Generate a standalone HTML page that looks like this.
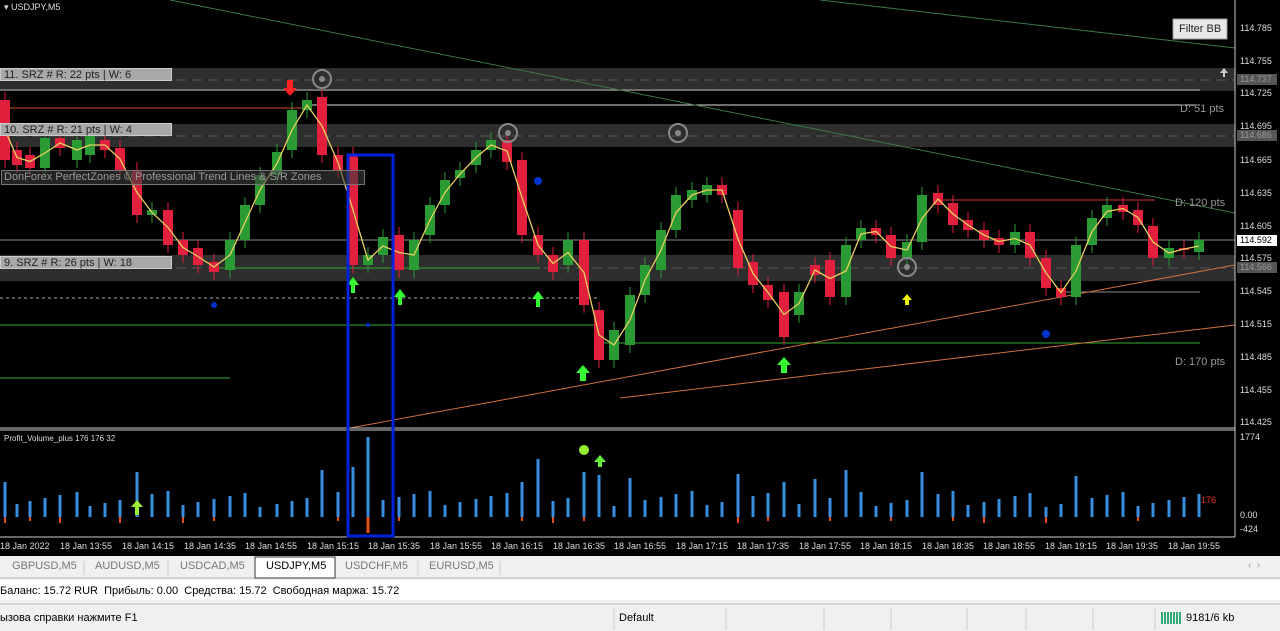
<!DOCTYPE html>
<html><head><meta charset="utf-8"><style>
body{margin:0;width:1280px;height:631px;overflow:hidden;background:#000;font-family:"Liberation Sans",sans-serif;position:relative}
.ax{position:absolute;left:1240px;font-size:9px;color:#ddd}
.tl{position:absolute;top:541px;font-size:9px;color:#ddd;white-space:nowrap}
.zl{position:absolute;left:0;width:172px;height:13px;background:#a8a8a8;color:#222;font-size:11px;line-height:13px;padding-left:3px;box-sizing:border-box;border:1px solid #ccc}
.tab{position:absolute;top:560px;font-size:11px;color:#777}
</style></head><body>
<svg id="s" width="1280" height="631" style="position:absolute;left:0;top:0">
<!-- zones -->
<rect x="0" y="68" width="1235" height="23" fill="#2e2e2e"/>
<rect x="0" y="124" width="1235" height="23" fill="#2e2e2e"/>
<rect x="0" y="255" width="1235" height="26" fill="#2e2e2e"/>
<line x1="0" y1="80" x2="1235" y2="80" stroke="#555" stroke-dasharray="10,6"/>
<line x1="0" y1="136" x2="1235" y2="136" stroke="#555" stroke-dasharray="10,6"/>
<line x1="0" y1="268" x2="1235" y2="268" stroke="#555" stroke-dasharray="10,6"/>
<line x1="0" y1="90" x2="1200" y2="90" stroke="#aaa"/>
<line x1="0" y1="108" x2="310" y2="108" stroke="#d05020"/>
<line x1="310" y1="105" x2="1200" y2="105" stroke="#ddd"/>
<line x1="0" y1="240" x2="1235" y2="240" stroke="#888"/>
<line x1="215" y1="268" x2="540" y2="268" stroke="#3a3"/>
<line x1="0" y1="325" x2="600" y2="325" stroke="#3a3"/>
<line x1="0" y1="378" x2="230" y2="378" stroke="#3a3"/>
<line x1="0" y1="298" x2="600" y2="298" stroke="#aaa" stroke-dasharray="3,3"/>
<line x1="600" y1="343" x2="1200" y2="343" stroke="#3a3"/>
<line x1="1060" y1="292" x2="1200" y2="292" stroke="#888"/>
<line x1="940" y1="200" x2="1155" y2="200" stroke="#c33"/>
<line x1="170" y1="0" x2="1235" y2="213" stroke="#3a7a4a"/>
<line x1="820" y1="0" x2="1235" y2="48" stroke="#3a7a4a"/>
<line x1="350" y1="428" x2="1235" y2="265" stroke="#d07040"/>
<line x1="620" y1="398" x2="1235" y2="325" stroke="#d07040"/>
<g id="c"></g>
<g fill="none" stroke="#888" stroke-width="2"><circle cx="322" cy="79" r="9"/><circle cx="508" cy="133" r="9"/><circle cx="678" cy="133" r="9"/><circle cx="907" cy="267" r="9"/></g>
<g fill="#888"><circle cx="322" cy="79" r="3"/><circle cx="508" cy="133" r="3"/><circle cx="678" cy="133" r="3"/><circle cx="907" cy="267" r="3"/></g>
<g fill="#3f3"><path d="M347 285l6-8 6 8h-4v8h-4v-8z"/><path d="M394 297l6-8 6 8h-4v8h-4v-8z"/><path d="M532 299l6-8 6 8h-4v8h-4v-8z"/><path d="M576 373l7-8 7 8h-4v8h-6v-8z"/><path d="M777 365l7-8 7 8h-4v8h-6v-8z"/></g>
<path d="M902 300l5-6 5 6h-3v5h-4v-5z" fill="#ee0"/>
<path d="M283 88l7 8 7-8h-4v-8h-6v8z" fill="#f22"/>
<g fill="#0033cc"><circle cx="214" cy="305" r="3"/><circle cx="538" cy="181" r="4"/><circle cx="1046" cy="334" r="4"/><circle cx="368" cy="325" r="2"/></g>
<line x1="0" y1="428" x2="1235" y2="428" stroke="#ccc"/>
<line x1="0" y1="430" x2="1235" y2="430" stroke="#ccc"/>
<line x1="1235" y1="0" x2="1235" y2="537" stroke="#ccc"/>
<line x1="0" y1="537" x2="1235" y2="537" stroke="#ccc"/>
<g id="v"></g>
<circle cx="584" cy="450" r="5" fill="#9e3"/>
<path d="M594 462l6-7 6 7h-4v5h-4v-5z" fill="#6e3"/>
<path d="M131 507l6-7 6 7h-4v8h-4v-8z" fill="#9e3"/>
<rect x="348" y="155" width="45" height="381" fill="none" stroke="#0022dd" stroke-width="3"/>
<rect x="1173" y="19" width="54" height="20" fill="#e8e8e8" stroke="#999"/>
<path d="M1220 73l4-5 4 5h-3v4h-2v-4z" fill="#ccc"/>
<rect x="1237" y="74" width="40" height="11" fill="#555"/>
<rect x="1237" y="130" width="40" height="11" fill="#555"/>
<rect x="1237" y="235" width="40" height="11" fill="#fff"/>
<rect x="1237" y="262" width="40" height="11" fill="#555"/>
<rect x="0" y="556" width="1280" height="75" fill="#f0f0f0"/>
<rect x="0" y="580" width="1280" height="20" fill="#fff"/>
<line x1="0" y1="578" x2="1280" y2="578" stroke="#bbb"/>
<line x1="0" y1="604" x2="1280" y2="604" stroke="#bbb"/>
<rect x="255" y="557" width="80" height="21" fill="#fff" stroke="#333"/>
<g stroke="#ccc"><line x1="84" y1="561" x2="84" y2="575"/><line x1="168" y1="561" x2="168" y2="575"/><line x1="418" y1="561" x2="418" y2="575"/><line x1="500" y1="561" x2="500" y2="575"/>
<line x1="614" y1="608" x2="614" y2="630"/><line x1="726" y1="608" x2="726" y2="630"/><line x1="824" y1="608" x2="824" y2="630"/><line x1="891" y1="608" x2="891" y2="630"/><line x1="967" y1="608" x2="967" y2="630"/><line x1="1026" y1="608" x2="1026" y2="630"/><line x1="1093" y1="608" x2="1093" y2="630"/><line x1="1155" y1="608" x2="1155" y2="630"/></g>
<g fill="#3a7"><rect x="1161" y="612" width="2" height="12"/><rect x="1164" y="612" width="2" height="12"/><rect x="1167" y="612" width="2" height="12"/><rect x="1170" y="612" width="2" height="12"/><rect x="1173" y="612" width="2" height="12"/><rect x="1176" y="612" width="2" height="12"/><rect x="1179" y="612" width="2" height="12"/></g>
</svg>
<div style="position:absolute;left:4px;top:2px;color:#ddd;font-size:9px">▾ USDJPY,M5</div>
<div class="zl" style="top:68px">11. SRZ # R: 22 pts | W: 6</div>
<div class="zl" style="top:123px">10. SRZ # R: 21 pts | W: 4</div>
<div class="zl" style="top:256px">9. SRZ # R: 26 pts | W: 18</div>
<div style="position:absolute;left:1px;top:170px;width:360px;height:13px;border:1px solid #777;background:rgba(60,60,60,.6);color:#999;font-size:11px;line-height:13px;padding-left:2px">DonForex PerfectZones © Professional Trend Lines &amp; S/R Zones</div>
<div style="position:absolute;left:1179px;top:23px;font-size:11px;color:#222">Filter BB</div>
<div style="position:absolute;left:1180px;top:103px;font-size:11px;color:#999">D: 51 pts</div>
<div style="position:absolute;left:1175px;top:197px;font-size:11px;color:#999">D: 120 pts</div>
<div style="position:absolute;left:1175px;top:356px;font-size:11px;color:#999">D: 170 pts</div>
<div style="position:absolute;left:4px;top:434px;font-size:8px;color:#ddd">Profit_Volume_plus 176 176 32</div>
<div style="position:absolute;left:1201px;top:495px;font-size:9px;color:#e33">176</div>
<div class="ax" style="top:23px">114.785</div><div class="ax" style="top:56px">114.755</div><div class="ax" style="top:74px;color:#999">114.737</div><div class="ax" style="top:88px">114.725</div><div class="ax" style="top:121px">114.695</div><div class="ax" style="top:130px;color:#999">114.686</div><div class="ax" style="top:155px">114.665</div><div class="ax" style="top:188px">114.635</div><div class="ax" style="top:221px">114.605</div><div class="ax" style="top:235px;color:#000">114.592</div><div class="ax" style="top:253px">114.575</div><div class="ax" style="top:262px;color:#999">114.566</div><div class="ax" style="top:286px">114.545</div><div class="ax" style="top:319px">114.515</div><div class="ax" style="top:352px">114.485</div><div class="ax" style="top:385px">114.455</div><div class="ax" style="top:417px">114.425</div><div class="ax" style="top:432px">1774</div><div class="ax" style="top:510px">0.00</div><div class="ax" style="top:524px">-424</div>
<div class="tl" style="left:0">18 Jan 2022</div><div class="tl" style="left:60px">18 Jan 13:55</div><div class="tl" style="left:122px">18 Jan 14:15</div><div class="tl" style="left:184px">18 Jan 14:35</div><div class="tl" style="left:245px">18 Jan 14:55</div><div class="tl" style="left:307px">18 Jan 15:15</div><div class="tl" style="left:368px">18 Jan 15:35</div><div class="tl" style="left:430px">18 Jan 15:55</div><div class="tl" style="left:491px">18 Jan 16:15</div><div class="tl" style="left:553px">18 Jan 16:35</div><div class="tl" style="left:614px">18 Jan 16:55</div><div class="tl" style="left:676px">18 Jan 17:15</div><div class="tl" style="left:737px">18 Jan 17:35</div><div class="tl" style="left:799px">18 Jan 17:55</div><div class="tl" style="left:860px">18 Jan 18:15</div><div class="tl" style="left:922px">18 Jan 18:35</div><div class="tl" style="left:983px">18 Jan 18:55</div><div class="tl" style="left:1045px">18 Jan 19:15</div><div class="tl" style="left:1106px">18 Jan 19:35</div><div class="tl" style="left:1168px">18 Jan 19:55</div>
<div class="tab" style="left:12px">GBPUSD,M5</div><div class="tab" style="left:95px">AUDUSD,M5</div><div class="tab" style="left:180px">USDCAD,M5</div><div class="tab" style="left:266px;color:#000">USDJPY,M5</div><div class="tab" style="left:345px">USDCHF,M5</div><div class="tab" style="left:429px">EURUSD,M5</div>
<div style="position:absolute;left:1248px;top:560px;font-size:10px;color:#999">‹ &nbsp;›</div>
<div style="position:absolute;left:0;top:585px;font-size:11px;color:#000">Баланс: 15.72 RUR &nbsp;Прибыль: 0.00 &nbsp;Средства: 15.72 &nbsp;Свободная маржа: 15.72</div>
<div style="position:absolute;left:0;top:612px;font-size:11px;color:#000">ызова справки нажмите F1</div>
<div style="position:absolute;left:619px;top:612px;font-size:11px;color:#000">Default</div>
<div style="position:absolute;left:1186px;top:612px;font-size:11px;color:#000">9181/6 kb</div>
<script>
var d=[[5,100,160],[17,150,165],[30,155,168],[45,168,138],[60,138,148],[77,160,140],[90,155,135],[105,140,150],[120,148,170],[137,170,215],[152,215,210],[168,210,245],[183,240,255],[198,248,265],[214,262,272],[230,270,240],[245,240,205],[260,205,175],[277,175,152],[292,150,110],[307,110,100],[322,97,155],[338,155,170],[353,155,265],[368,265,255],[383,255,237],[399,235,270],[414,270,240],[430,235,205],[445,205,180],[460,178,170],[476,165,150],[491,150,140],[507,140,162],[522,160,235],[538,235,255],[553,255,272],[568,265,240],[584,240,305],[599,310,360],[614,360,330],[630,345,295],[645,295,265],[661,270,230],[676,230,195],[692,200,190],[707,195,185],[722,185,195],[738,210,268],[753,262,285],[768,285,300],[784,292,337],[799,315,292],[815,265,275],[830,260,297],[846,297,245],[861,240,228],[876,228,235],[891,235,258],[907,258,242],[922,242,195],[938,193,205],[953,203,225],[968,220,230],[984,230,240],[999,238,245],[1015,245,232],[1030,232,258],[1046,258,288],[1061,288,297],[1076,297,245],[1092,245,218],[1107,218,205],[1123,205,212],[1138,210,225],[1153,226,258],[1169,258,248],[1184,248,250],[1199,252,240]];
var h='',v='',pts=[];
d.forEach(function(c,i){var x=c[0],o=c[1],cl=c[2],up=cl<o,col=up?'#2a9a34':'#e0203c',t=Math.min(o,cl),b=Math.max(o,cl);
h+='<line x1="'+x+'" y1="'+(t-8)+'" x2="'+x+'" y2="'+(b+8)+'" stroke="'+col+'"/><rect x="'+(x-5)+'" y="'+t+'" width="10" height="'+Math.max(2,b-t)+'" fill="'+col+'"/>';
pts.push(x+','+((o+cl)/2));
var vh=10+((i*37)%17)+(Math.abs(o-cl)>40?25:0);
if(x==353)vh=50;if(x==368)vh=80;if(x==538)vh=58;if(x==584)vh=45;if(x==599)vh=42;if(x==815)vh=38;
v+='<rect x="'+(x-1.5)+'" y="'+(517-vh)+'" width="3" height="'+vh+'" fill="#3a8ee0"/>';
if(!up&&i%2==0)v+='<rect x="'+(x-1)+'" y="517" width="2" height="'+(i%4==0?6:4)+'" fill="#e05020"/>';});
h+='<polyline points="'+pts.join(' ')+'" fill="none" stroke="#e8d060" stroke-width="1.3"/>';
document.getElementById('c').innerHTML=h;document.getElementById('v').innerHTML=v+'<rect x="366.5" y="517" width="3" height="16" fill="#e05020"/>';
</script>
</body></html>
